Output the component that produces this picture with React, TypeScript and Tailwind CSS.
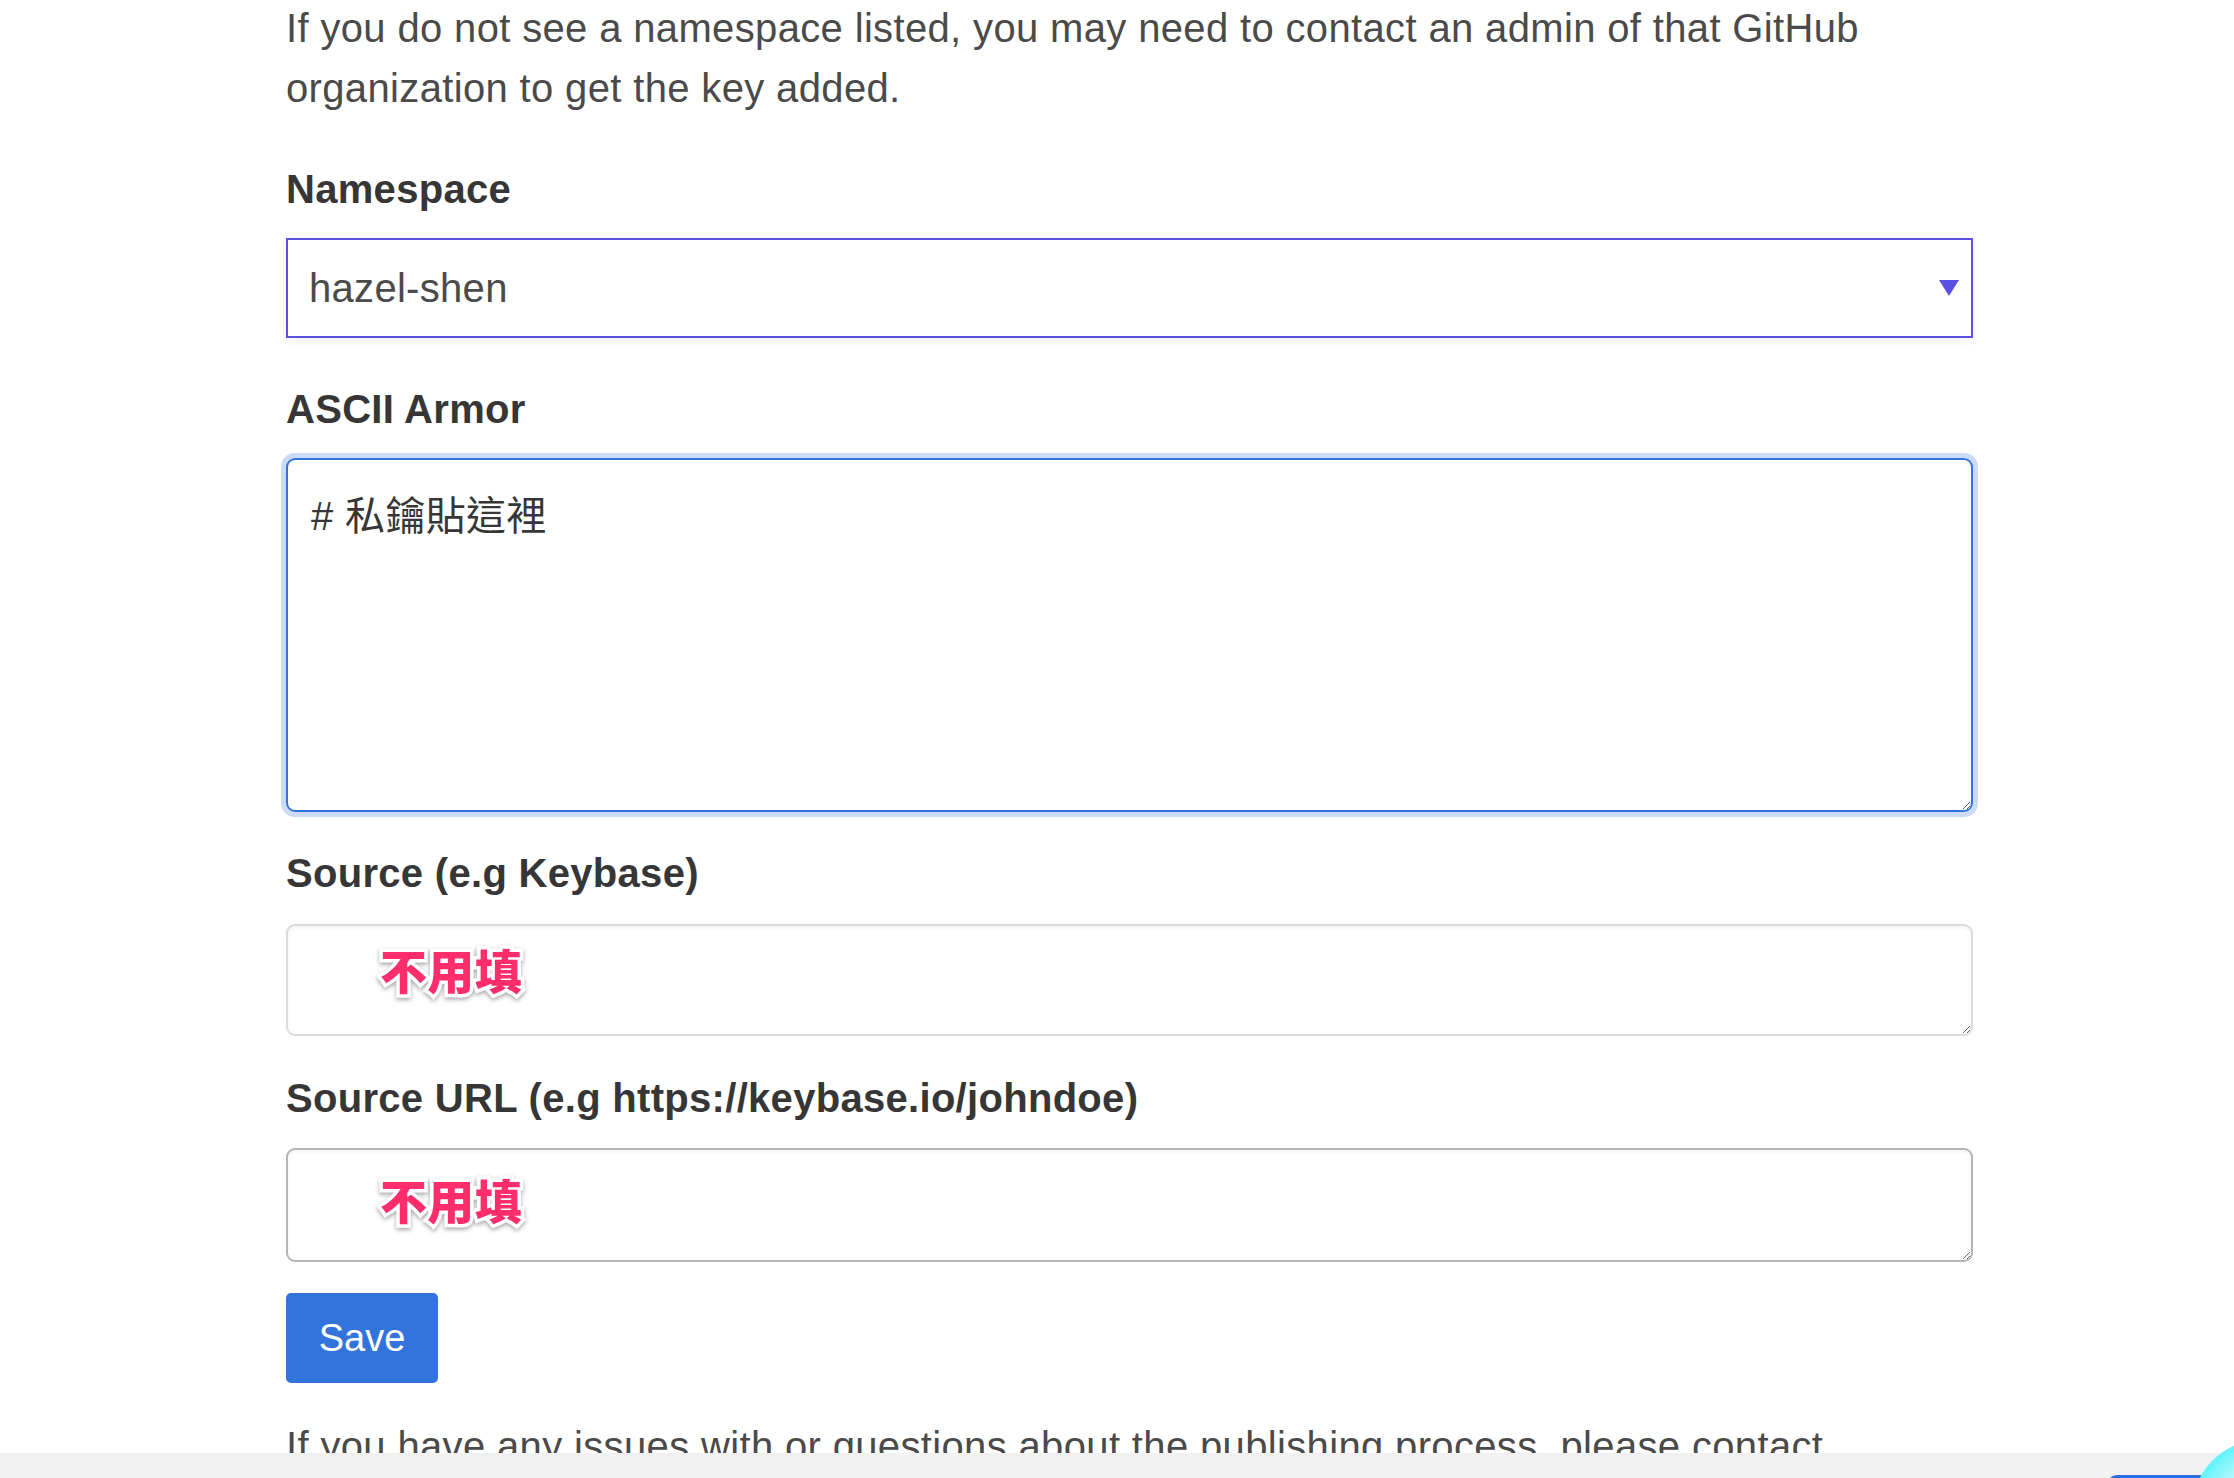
import { useEffect, useRef } from "react";

const font = "font-['Liberation_Sans','Noto_Sans_CJK_TC',Arial,sans-serif]";

function FieldLabel({ children, className }: { children: React.ReactNode; className: string }) {
  return (
    <label className={`block text-[40px] font-bold leading-[60px] tracking-[0.3px] text-[#363636] ${className}`}>
      {children}
    </label>
  );
}

// annotation stamped over the empty textareas
function Hint({ className }: { className: string }) {
  return (
    <div className={`pointer-events-none absolute inset-0 flex items-center pl-[94px] ${className}`}>
      <span className="font-['Noto_Sans_CJK_TC',sans-serif] text-[47px] font-black leading-none text-[#ff2d6c] [-webkit-text-stroke:7px_white] [paint-order:stroke_fill] drop-shadow-[0_2px_2px_rgba(0,0,0,0.35)]">
        不用填
      </span>
    </div>
  );
}

export default function App() {
  const armorRef = useRef<HTMLTextAreaElement>(null);

  useEffect(() => {
    const el = armorRef.current;
    if (!el) return;
    el.focus({ preventScroll: true });
    el.setSelectionRange(4, 4);
  }, []);

  return (
    <div className={`relative flex h-[1478px] flex-col overflow-hidden bg-white ${font}`}>
      <main className="min-h-0 flex-1 overflow-hidden pl-[286px] text-[40px] leading-[60px] tracking-[0.35px] text-[#4a4a4a]">
        <div className="mt-[-2px] w-[1687px]">
          <p>
            If you do not see a namespace listed, you may need to contact an admin of that GitHub
            <br />
            organization to get the key added.
          </p>

          {/* Namespace */}
          <FieldLabel className="mt-[41px] mb-[19px]">Namespace</FieldLabel>
          <div className="flex h-[100px] items-center border-2 border-[#5a50e2] bg-white pr-[12px] shadow-[0_2px_10px_rgba(0,0,0,0.07)]">
            <select
              defaultValue="hazel-shen"
              className="h-full min-w-0 flex-1 appearance-none bg-transparent pl-[21px] text-[40px] tracking-[0.3px] text-[#4a4a4a] outline-none"
            >
              <option value="hazel-shen">hazel-shen</option>
            </select>
            <svg width="20" height="16" viewBox="0 0 20 16" className="shrink-0">
              <path d="M0 0h20L10 16z" fill="#5a50e2" />
            </svg>
          </div>

          {/* ASCII Armor */}
          <FieldLabel className="mt-[41px] mb-[19px]">ASCII Armor</FieldLabel>
          <textarea
            ref={armorRef}
            defaultValue="# 私鑰貼這裡"
            className="block h-[354px] w-full resize-y rounded-[9px] border-2 border-[#3273dc] px-[23px] pt-[26px] text-[40px] leading-[60px] text-[#363636] shadow-[0_0_0_5px_rgba(50,115,220,0.25)] caret-[#222] outline-none focus:outline-none"
          />

          {/* Source */}
          <FieldLabel className="mt-[31px] mb-[21px]">Source (e.g Keybase)</FieldLabel>
          <div className="relative">
            <textarea className="block h-[112px] w-full resize-y rounded-[9px] border-2 border-[#dbdbdb] px-[23px] text-[40px] shadow-[inset_0_2px_4px_rgba(10,10,10,0.05)] outline-none" />
            <Hint className="pb-[24px]" />
          </div>

          {/* Source URL */}
          <FieldLabel className="mt-[32px] mb-[20px]">Source URL (e.g https://keybase.io/johndoe)</FieldLabel>
          <div className="relative">
            <textarea className="block h-[114px] w-full resize-y rounded-[9px] border-2 border-[#b5b5b5] px-[23px] text-[40px] shadow-[inset_0_2px_4px_rgba(10,10,10,0.05)] outline-none" />
            <Hint className="pb-[14px]" />
          </div>

          <button className="mt-[31px] flex h-[90px] w-[152px] items-center justify-center rounded-[5px] bg-[#3273dc] text-[38px] tracking-normal text-white">
            Save
          </button>

          <p className="mt-[33px]">
            If you have any issues with or questions about the publishing process, please contact
          </p>
        </div>
      </main>

      <div className="h-[25px] shrink-0 bg-[#f1f1f1]" />

      {/* widgets peeking in at the bottom-right corner */}
      <div className="absolute left-[2107px] top-[1475px] h-[40px] w-[160px] rounded-tl-[10px] bg-[#2c6fe0]" />
      <div className="absolute left-[2192px] top-[1440px] h-[140px] w-[140px] rounded-full bg-[radial-gradient(circle_at_60%_60%,#eefcfd_0%,#aef6fb_55%,#00f2ff_100%)]" />
    </div>
  );
}
